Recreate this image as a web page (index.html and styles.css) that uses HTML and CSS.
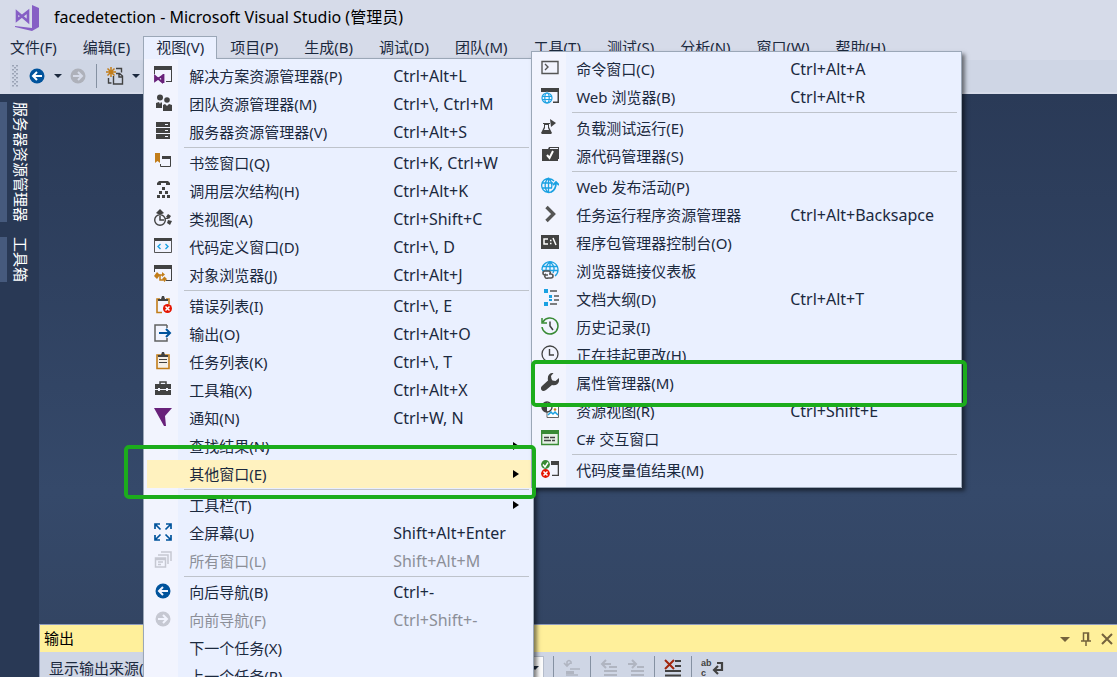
FILE: index.html
```html
<!DOCTYPE html>
<html lang="zh-CN">
<head>
    <meta charset="UTF-8">
    <meta name="viewport" content="width=device-width, initial-scale=1.0">
    <title>facedetection - Microsoft Visual Studio (管理员)</title>
    <link rel="stylesheet" href="styles.css">
</head>
<body>
    <header class="titlebar">
        <svg class="logo" viewBox="0 0 26 26"><path fill="#865fc5" d="M18 0l7 3v19l-7 4-17-4v-1l17 2z"/><path fill="none" stroke="#865fc5" stroke-width="2.600" d="M3 7v8l11-8.500v10z"/></svg>
        <h1>facedetection - Microsoft Visual Studio (管理员)</h1>
    </header>

    <nav class="menubar">
        <button>文件(F)</button>
        <button>编辑(E)</button>
        <div class="menu-holder">
            <button class="open">视图(V)</button>

            <!-- View menu -->
            <ul class="menu view-menu">
                <li><button><svg viewBox="0 0 18 18"><path fill="#424242" d="M0 0h18v16h-6v-1h5V4H1v4H0z"/><path fill="none" stroke="#68217a" stroke-width="1.800" d="M1 10v5l7-5v6zM9.500 8v9"/></svg><span>解决方案资源管理器(P)</span><kbd>Ctrl+Alt+L</kbd></button></li>
                <li><button><svg viewBox="0 0 18 18"><g fill="#424242"><circle cx="6" cy="3.500" r="3"/><circle cx="13" cy="6" r="2.800"/><path d="M2 9l3-1 1 2 1-2 1 1v5H2zM9 11l2-1 2 2 2-2 3 1v6H9z"/></g></svg><span>团队资源管理器(M)</span><kbd>Ctrl+\, Ctrl+M</kbd></button></li>
                <li><button><svg viewBox="0 0 18 18"><path fill="#424242" d="M2 0h14v5H2zM2 6h14v5H2zM2 12h14v5H2z"/><path stroke="#f2f4fe" d="M11 2.500h3M11 8.500h3M11 14.500h3"/></svg><span>服务器资源管理器(V)</span><kbd>Ctrl+Alt+S</kbd></button></li>
                <li class="line"></li>
                <li><button><svg viewBox="0 0 18 18"><path fill="#c27d1a" d="M1 0h5v10L3.500 8 1 10z"/><path fill="none" stroke="#424242" d="M8 5h8.500v8.500h-10V11"/><path fill="#424242" d="M8 3h9v3H8z"/></svg><span>书签窗口(Q)</span><kbd>Ctrl+K, Ctrl+W</kbd></button></li>
                <li><button><svg viewBox="0 0 18 18"><g fill="#424242"><path d="M3 2l2-2h9l2 2v2h-4V2H7v2H3zM8 6h3v3H8zM5 10h3v3H5zM11 10h3v3h-3zM3 14h3v3H3zM8 14h3v3H8zM13 14h3v3h-3z"/></g></svg><span>调用层次结构(H)</span><kbd>Ctrl+Alt+K</kbd></button></li>
                <li><button><svg viewBox="0 0 18 18"><path fill="#424242" d="M6 0l4 4-2 1H4L2 4zM14 5l3 2-2 3-3-2zM14 11l4 1-2 4-3-2zM11 9h3v1h-3z"/><circle cx="6" cy="11" r="5.300" fill="none" stroke="#424242" stroke-width="1.400"/><path fill="none" stroke="#424242" stroke-width="1.500" d="M6 7v4h4"/></svg><span>类视图(A)</span><kbd>Ctrl+Shift+C</kbd></button></li>
                <li><button><svg viewBox="0 0 18 18"><path fill="#424242" d="M0 1h18v3H0z"/><path fill="none" stroke="#555" d="M.5 3v12.500h17V3"/><path fill="none" stroke="#1ba1e2" stroke-width="1.400" d="M6.500 7L4 9.500 6.500 12M11.500 7L14 9.500 11.500 12"/></svg><span>代码定义窗口(D)</span><kbd>Ctrl+\, D</kbd></button></li>
                <li><button><svg viewBox="0 0 18 18"><path fill="#424242" d="M0 0h18v16h-6v-1h5V4H1v3H0z"/><path fill="none" stroke="#c27d1a" stroke-width="1.500" d="M3 10h6M6 10v5h3"/><path fill="#c27d1a" d="M0 11l3-4 3 3-3 4zM8 7l3 2.500L8 12zM8 14l2.500-2.500L13 14l-2.500 3z"/></svg><span>对象浏览器(J)</span><kbd>Ctrl+Alt+J</kbd></button></li>
                <li class="line"></li>
                <li><button><svg viewBox="0 0 18 18"><path fill="none" stroke="#c27d1a" stroke-width="1.600" d="M6 3H3v13.500h5M12 3h3v5"/><path fill="#424242" d="M4 5V3h3l1-3h2l1 3h3v2z"/><circle cx="13.500" cy="12.500" r="4.500" fill="#e51400"/><path stroke="#fff" stroke-width="1.500" d="M11.500 10.500l4 4M15.500 10.500l-4 4"/></svg><span>错误列表(I)</span><kbd>Ctrl+\, E</kbd></button></li>
                <li><button><svg viewBox="0 0 18 18"><path fill="none" stroke="#616161" stroke-width="1.500" d="M13 1H1v16h12v-3M13 1v3"/><path fill="none" stroke="#00539c" stroke-width="2" d="M5 9h11M12 5l4 4-4 4"/></svg><span>输出(O)</span><kbd>Ctrl+Alt+O</kbd></button></li>
                <li><button><svg viewBox="0 0 18 18"><path fill="#f5efe8" stroke="#c27d1a" stroke-width="1.600" d="M3 3h12v13.500H3z"/><path fill="#424242" d="M4 5V3h3l1-3h2l1 3h3v2z"/><path stroke="#424242" d="M5 7.500h8M5 10.500h8"/></svg><span>任务列表(K)</span><kbd>Ctrl+\, T</kbd></button></li>
                <li><button><svg viewBox="0 0 18 18"><path fill="none" stroke="#424242" stroke-width="1.500" d="M6 4V2h6v2"/><path fill="#424242" d="M1 4h16v5h-3V8h-2v1H6V8H4v1H1zM1 10h3v1h2v-1h6v1h2v-1h3v5H1z"/></svg><span>工具箱(X)</span><kbd>Ctrl+Alt+X</kbd></button></li>
                <li><button><svg viewBox="0 0 18 18"><path fill="#68217a" d="M0 0h18l-7 8 1 10h-2z"/></svg><span>通知(N)</span><kbd>Ctrl+W, N</kbd></button></li>
                <li><button class="has-sub"><i></i><span>查找结果(N)</span></button></li>
                <li><button class="has-sub hot"><i></i><span>其他窗口(E)</span></button></li>
                <li class="line"></li>
                <li><button class="has-sub"><i></i><span>工具栏(T)</span></button></li>
                <li><button><svg viewBox="0 0 18 18"><path fill="none" stroke="#00539c" stroke-width="1.700" d="M1 6V1h5M1 1l5.500 5.500M12 1h5v5M17 1l-5.500 5.500M1 12v5h5M1 17l5.500-5.500M17 12v5h-5M17 17l-5.500-5.500"/></svg><span>全屏幕(U)</span><kbd>Shift+Alt+Enter</kbd></button></li>
                <li><button disabled><svg viewBox="0 0 18 18"><path fill="none" stroke="#c6c8d2" stroke-width="1.500" d="M7 1h10v9M4 4h10v9M1.500 7h10v9h-10zM1.500 8.500h10M4 11h5M4 13.500h3"/></svg><span>所有窗口(L)</span><kbd>Shift+Alt+M</kbd></button></li>
                <li class="line"></li>
                <li><button><svg viewBox="0 0 18 18"><circle cx="9" cy="9" r="7.500" fill="#00539c"/><path fill="none" stroke="#f2f4fe" stroke-width="2" d="M14 9H5M9 5L5 9l4 4"/></svg><span>向后导航(B)</span><kbd>Ctrl+-</kbd></button></li>
                <li><button disabled><svg viewBox="0 0 18 18"><circle cx="9" cy="9" r="7.500" fill="#c6c8d2"/><path fill="none" stroke="#f2f4fe" stroke-width="2" d="M4 9h9M9 5l4 4-4 4"/></svg><span>向前导航(F)</span><kbd>Ctrl+Shift+-</kbd></button></li>
                <li><button><i></i><span>下一个任务(X)</span></button></li>
                <li><button><i></i><span>上一个任务(R)</span></button></li>
            </ul>

            <!-- Other windows submenu -->
            <ul class="menu sub-menu">
                <li><button><svg viewBox="0 0 18 18"><path fill="none" stroke="#555" stroke-width="1.400" d="M1 2.500h16v12H1zM4 5l3 3-3 3"/></svg><span>命令窗口(C)</span><kbd>Ctrl+Alt+A</kbd></button></li>
                <li><button><svg viewBox="0 0 18 18"><path fill="#424242" d="M0 1h18v15h-6v-1.500h4.500V5H0z"/><circle cx="6" cy="11" r="6.200" fill="#f2f4fe"/><g fill="none" stroke="#1ba1e2" stroke-width="1.200"><circle cx="6" cy="11" r="5"/><ellipse cx="6" cy="11" rx="2.200" ry="5"/><path d="M1 9.500h10M1 12.500h10"/></g></svg><span>Web 浏览器(B)</span><kbd>Ctrl+Alt+R</kbd></button></li>
                <li class="line"></li>
                <li><button><svg viewBox="0 0 18 18"><path fill="#424242" d="M9 1l6 4-5 4zM2 5h7v1H8v3l3 6-1 1H1l-1-1 3-6V6H2z"/><path fill="#f2f4fe" d="M4 7h3v3l1 2H3l1-2z"/></svg><span>负载测试运行(E)</span></button></li>
                <li><button><svg viewBox="0 0 18 18"><path fill="#424242" d="M1 3h6l1-2h10v12h-1v2H1z"/><path stroke="#f2f4fe" d="M9 2.500h8"/><path fill="none" stroke="#fff" stroke-width="2" d="M6 9l2.500 3L12 5"/></svg><span>源代码管理器(S)</span></button></li>
                <li class="line"></li>
                <li><button><svg viewBox="0 0 18 18"><g fill="none" stroke="#1ba1e2" stroke-width="1.300"><path d="M13 4a7 7 0 1 0-1 10M7.500 1C3 5 3 12 7.500 15.500M7.500 1c3 3 4 6 3 10M1 6h11M1 11h10M7.500 1v14"/><path stroke-width="1.800" d="M10 15q5-2 5-9M12 8l3-3 3 3"/></g></svg><span>Web 发布活动(P)</span></button></li>
                <li><button><svg viewBox="0 0 18 18"><path fill="none" stroke="#555" stroke-width="3.400" d="M5.500 2l7 7-7 7"/></svg><span>任务运行程序资源管理器</span><kbd>Ctrl+Alt+Backsapce</kbd></button></li>
                <li><button><svg viewBox="0 0 18 18"><path fill="#424242" d="M0 2h18v14H0z"/><path fill="none" stroke="#fff" stroke-width="1.500" d="M7 6H3v5h4M9 7.500h1.500M9 10.500h1.500M12 5l3 7"/></svg><span>程序包管理器控制台(O)</span></button></li>
                <li><button><svg viewBox="0 0 18 18"><g fill="none" stroke="#1ba1e2" stroke-width="1.300"><path d="M1 9a8 8 0 1 1 13 6M9 1C6 3 5 6 5 9M9 1c4 3 5 7 3 11M2 5.500h14M1 9.500h16M9 1v8"/></g><path fill="none" stroke="#555" stroke-width="1.600" d="M7 14H4a2 2 0 0 1 0-4h4a2 2 0 0 1 1 3M5 13a2 2 0 0 0 2 4h3a2 2 0 0 0 0-4H8"/></svg><span>浏览器链接仪表板</span></button></li>
                <li><button><svg viewBox="0 0 18 18"><path fill="#1ba1e2" d="M3 0h4v4H3zM8 6h3v3H8zM8 10h3v2H8zM3 13h4v4H3z"/><path stroke="#555" stroke-width="1.400" d="M9 2h7M13 7h5M13 11h5M9 15h7"/></svg><span>文档大纲(D)</span><kbd>Ctrl+Alt+T</kbd></button></li>
                <li><button><svg viewBox="0 0 18 18"><path fill="none" stroke="#388a34" stroke-width="1.500" d="M2 5a8 8 0 1 1-1 5M1 1v5h5"/><path fill="none" stroke="#424242" stroke-width="1.500" d="M9 4.500V9l3 4"/></svg><span>历史记录(I)</span></button></li>
                <li><button><svg viewBox="0 0 18 18"><circle cx="9" cy="9" r="8" fill="none" stroke="#424242" stroke-width="1.300"/><path fill="none" stroke="#424242" stroke-width="1.400" d="M8.500 4v6H13"/></svg><span>正在挂起更改(H)</span></button></li>
                <li><button><svg viewBox="0 0 18 18"><path fill="#424242" d="M12.500 0L10 3l.5 3 1 1.500 3 .5L18 5c1 6-3 8-7 7l-6 5q-3 2-4.500 0T1 13l6-5.500C6 2 9-.5 12.500 0z"/></svg><span>属性管理器(M)</span></button></li>
                <li><button><svg viewBox="0 0 18 18"><path fill="#fff" stroke="#666" d="M6 5.500h11.500v11H6z"/><path fill="none" stroke="#1ba1e2" stroke-width="1.500" d="M7 14l3-3 2 2 2-2 3 3"/><circle cx="14" cy="8.500" r="1.300" fill="#c27d1a"/><circle cx="6" cy="6" r="5" fill="#f2f4fe" stroke="#424242" stroke-width="1.400"/><path fill="#424242" d="M6 1a5 5 0 0 0 0 10z"/></svg><span>资源视图(R)</span><kbd>Ctrl+Shift+E</kbd></button></li>
                <li><button><svg viewBox="0 0 18 18"><path fill="#e5efe5" stroke="#388a34" stroke-width="1.300" d="M.7 2h16.600v13.500H.7z"/><path fill="#388a34" d="M0 1h18v4H0z"/><path stroke="#424242" stroke-width="1.300" d="M3 8.500h5M9 8.500h5M3 11.500h7M11 11.500h3"/></svg><span>C# 交互窗口</span></button></li>
                <li class="line"></li>
                <li><button><svg viewBox="0 0 18 18"><path fill="#424242" d="M10 1h8v15h-7v-1.300h5.700V5H10z"/><circle cx="4.500" cy="4.500" r="4.400" fill="#388a34"/><path fill="none" stroke="#fff" stroke-width="1.500" d="M2 4.500L4 7l3-4.500"/><circle cx="4.500" cy="13.500" r="4.400" fill="#e51400"/><path stroke="#fff" stroke-width="1.500" d="M2.500 11.500l4 4M6.500 11.500l-4 4"/></svg><span>代码度量值结果(M)</span></button></li>
            </ul>
        </div>
        <button>项目(P)</button>
        <button>生成(B)</button>
        <button>调试(D)</button>
        <button>团队(M)</button>
        <button>工具(T)</button>
        <button>测试(S)</button>
        <button>分析(N)</button>
        <button>窗口(W)</button>
        <button>帮助(H)</button>
    </nav>

    <div class="toolbar">
        <svg class="grip" viewBox="0 0 7 22"><path stroke="#8b94a6" stroke-width="1.500" stroke-dasharray="1.500 2.500" d="M1 0v22M5 0v22M3 2v20"/></svg>
        <button aria-label="向后导航"><svg class="icon" viewBox="0 0 18 18"><circle cx="9" cy="9" r="7.500" fill="#00539c"/><path fill="none" stroke="#fff" stroke-width="2" d="M14 9H5M9 5L5 9l4 4"/></svg></button>
        <button class="drop" aria-label="历史位置"></button>
        <button aria-label="向前导航" disabled><svg class="icon" viewBox="0 0 18 18"><circle cx="9" cy="9" r="7.500" fill="#aeb1ba"/><path fill="none" stroke="#d6dbe9" stroke-width="2" d="M4 9h9M9 5l4 4-4 4"/></svg></button>
        <span class="divider"></span>
        <button aria-label="新建项目"><svg class="icon" viewBox="0 0 18 18"><path stroke="#c27d1a" stroke-width="1.500" d="M5 0v10M0 5h10M1.500 1.500l7 7M8.500 1.500l-7 7"/><path fill="none" stroke="#424242" stroke-width="1.400" d="M10 1.500h5.500v4M2.500 11v5h3M7.500 9v8h9V9l-3-2.500H10M13 7v3h3"/></svg></button>
        <button class="drop" aria-label="新建选项"></button>
    </div>

    <div class="workspace">
        <aside class="rail">
            <button>服务器资源管理器</button>
            <button>工具箱</button>
        </aside>
        <main class="main">
            <div class="editor"></div>
            <section class="output">
                <div class="output-title">
                    <h2>输出</h2>
                    <button aria-label="窗口位置"><svg viewBox="0 0 16 16"><path fill="#75633d" d="M3 6h10l-5 5z"/></svg></button>
                    <button aria-label="自动隐藏"><svg viewBox="0 0 16 16"><path fill="none" stroke="#75633d" stroke-width="1.500" d="M5.500 10V2h5v8M3 10h10M8 10v5"/><path fill="#75633d" d="M9 2h2v8H9z"/></svg></button>
                    <button aria-label="关闭"><svg viewBox="0 0 16 16"><path stroke="#75633d" stroke-width="2" d="M3 3l10 10M13 3L3 13"/></svg></button>
                </div>
                <div class="output-bar">
                    <label for="source">显示输出来源(S):</label>
                    <div class="source-box"><select id="source"><option></option></select></div>
                    <span class="divider"></span>
                    <button aria-label="在代码中查找消息" disabled><svg class="icon" viewBox="0 0 18 18"><path fill="none" stroke="#b0b5c1" stroke-width="1.600" d="M1 4l3 3 3-3M4 7V3q2-3 4 0v2M7 10h10M3 16h12"/><path fill="#b0b5c1" d="M3 12h8v3H3z"/></svg></button>
                    <span class="divider"></span>
                    <button aria-label="上一条消息" disabled><svg class="icon" viewBox="0 0 18 18"><path fill="none" stroke="#b0b5c1" stroke-width="2" d="M2 5h9M6 1L2 5l4 4M9 8h8M4 12h13M4 16h13"/></svg></button>
                    <button aria-label="下一条消息" disabled><svg class="icon" viewBox="0 0 18 18"><path fill="none" stroke="#b0b5c1" stroke-width="2" d="M1 5h8M5 1l4 4-4 4M10 8h7M4 12h13M4 16h13"/></svg></button>
                    <span class="divider"></span>
                    <button aria-label="全部清除"><svg class="icon" viewBox="0 0 18 18"><path stroke="#424242" stroke-width="2" d="M11 2h6M11 7h6M1 12h16M1 16.500h16"/><path stroke="#a1260d" stroke-width="2" d="M1 1l9 9M10 1l-9 9"/></svg></button>
                    <span class="divider"></span>
                    <button class="wrap" aria-label="切换自动换行"><span>ab<br>c</span><svg viewBox="0 0 12 14"><path fill="none" stroke="#424242" stroke-width="2.200" d="M5 2h5v7H2M6 5L2 9l4 4"/></svg></button>
                </div>
            </section>
        </main>
    </div>

    <div class="mark mark-view"></div>
    <div class="mark mark-property"></div>
</body>
</html>
```
FILE: styles.css
```css
* {
    box-sizing: border-box;
}

body {
    display: flex;
    flex-direction: column;
    height: 100vh;
    margin: 0;
    overflow: hidden;
    background: #d6dbe9;
    color: #1b293e;
    font-family: "Noto Sans", "Noto Sans CJK SC", sans-serif;
    font-size: 15px;
    line-height: 20px;
}

button {
    padding: 0;
    border: 0;
    background: none;
    color: inherit;
    font: inherit;
    white-space: nowrap;
}

h1, h2 {
    margin: 0;
    padding-bottom: 2px;
    font-size: 15px;
    font-weight: 400;
    color: #000;
}

/* Title and menu bar */
.titlebar {
    display: flex;
    flex: none;
    align-items: center;
    gap: 14px;
    height: 36px;
    padding-left: 14px;
}

.titlebar h1 {
    font-size: 16px;
}

.logo {
    width: 26px;
    height: 26px;
}

.menubar {
    display: flex;
    flex: none;
    height: 24px;
    margin-left: -3px;
}

.menubar > button,
.menu-holder > button {
    height: 23px;
    padding: 0 12px 2px;
    border: 1px solid transparent;
    border-bottom: 0;
}

.menu-holder {
    position: relative;
}

.menu-holder > .open {
    position: relative;
    z-index: 2;
    background: #eaf0ff;
    border-color: #9ba7b7;
}

/* Drop-down menus */
.menu {
    position: absolute;
    margin: 0;
    padding: 3px 0;
    list-style: none;
    border: 1px solid #9ba7b7;
    background: linear-gradient(to right, #f2f4fe 34px, #eaf0ff 34px);
    box-shadow: 3px 3px 4px rgba(0, 0, 0, 0.5);
}

.view-menu {
    top: 22px;
    left: 0;
    z-index: 1;
    width: 391px;
}

.sub-menu {
    top: 15px;
    left: 388px;
    z-index: 3;
    width: 431px;
}

.menu button {
    display: grid;
    grid-template-columns: 45px 1fr 140px;
    align-items: center;
    width: 100%;
    height: 28px;
    text-align: left;
}

.sub-menu button {
    grid-template-columns: 44px 1fr 171px;
}

.menu svg {
    width: 18px;
    height: 18px;
    margin: 0 0 2px 10px;
}

.sub-menu svg {
    margin-left: 9px;
}

.menu kbd {
    font-family: inherit;
    font-size: 16px;
}

.menu button:disabled {
    color: #8c8f98;
}

.menu .line {
    height: 3px;
    padding: 1px 4px 1px 40px;
}

.menu .line::before {
    content: "";
    display: block;
    height: 1px;
    background: #bec3cb;
}

.menu .has-sub::after {
    content: "";
    justify-self: end;
    margin-right: 14px;
    border: 4px solid transparent;
    border-left: 6px solid #000;
    border-right: 0;
}

.menu .hot {
    background: linear-gradient(to right, transparent 3px, #fff2bf 3px);
}

/* Toolbar */
.toolbar {
    display: flex;
    flex: none;
    align-items: center;
    height: 34px;
    margin-left: 10px;
    padding: 0 2px;
    background: #cfd6e5;
    border-bottom: 2px solid #d6dbe9;
}

.toolbar button {
    display: flex;
}

.icon {
    display: block;
    width: 18px;
    height: 18px;
}

.grip {
    width: 7px;
    height: 22px;
    margin-right: 9px;
}

.drop {
    width: 23px;
    justify-content: center;
}

.drop::before {
    content: "";
    border: 4px solid transparent;
    border-top-color: #1b293e;
    border-bottom: 0;
}

.divider {
    width: 1px;
    height: 24px;
    margin: 0 9px;
    background: #8591a2;
}

/* Workspace */
.workspace {
    display: flex;
    flex: 1;
    min-height: 0;
    background: #293955;
}

.rail {
    display: flex;
    flex-direction: column;
    gap: 15px;
    width: 39px;
    padding-top: 8px;
}

.rail button {
    width: 31px;
    padding-left: 5px;
    border-left: 7px solid #465a7d;
    color: #fff;
    writing-mode: vertical-rl;
    text-orientation: sideways;
}

.main {
    display: flex;
    flex: 1;
    flex-direction: column;
    min-width: 0;
}

.editor {
    flex: 1;
    background: linear-gradient(#2a3a57, #35496a 75%, #334563);
}

/* Output window */
.output {
    flex: none;
    height: 53px;
    overflow: hidden;
    border: 1px solid #8e9bbc;
    border-width: 1px 0 0 1px;
    background: #cfd6e5;
}

.output-title {
    display: flex;
    align-items: center;
    gap: 5px;
    height: 27px;
    padding: 0 2px 0 4px;
    background: #fff09b;
}

.output-title h2 {
    flex: 1;
}

.output-title svg {
    display: block;
    width: 16px;
    height: 16px;
}

.output-bar {
    display: flex;
    align-items: center;
    height: 32px;
    padding-left: 9px;
    white-space: nowrap;
}

.output-bar label {
    width: 119px;
}

.source-box {
    position: relative;
    width: 376px;
}

.source-box::after {
    content: "";
    position: absolute;
    top: 10px;
    right: 5px;
    border: 4px solid transparent;
    border-top-color: #1b293e;
    border-bottom: 0;
}

.source-box select {
    display: block;
    width: 100%;
    height: 24px;
    appearance: none;
    border: 1px solid #b4bccb;
    border-radius: 0;
    background: #fcfcfc;
}

.output-bar button + button {
    margin-left: 9px;
}

.wrap {
    display: flex;
    align-items: center;
}

.wrap span {
    color: #424242;
    font-family: "Liberation Sans", sans-serif;
    font-size: 9px;
    font-weight: 700;
    line-height: 10px;
    text-align: left;
}

.wrap svg {
    width: 12px;
    height: 14px;
}

/* Highlight frames */
.mark {
    position: absolute;
    z-index: 5;
    border: 4px solid #1cac1c;
    border-radius: 5px;
}

.mark-view {
    top: 445px;
    left: 124px;
    width: 412px;
    height: 54px;
}

.mark-property {
    top: 360px;
    left: 531px;
    width: 436px;
    height: 47px;
}
```
